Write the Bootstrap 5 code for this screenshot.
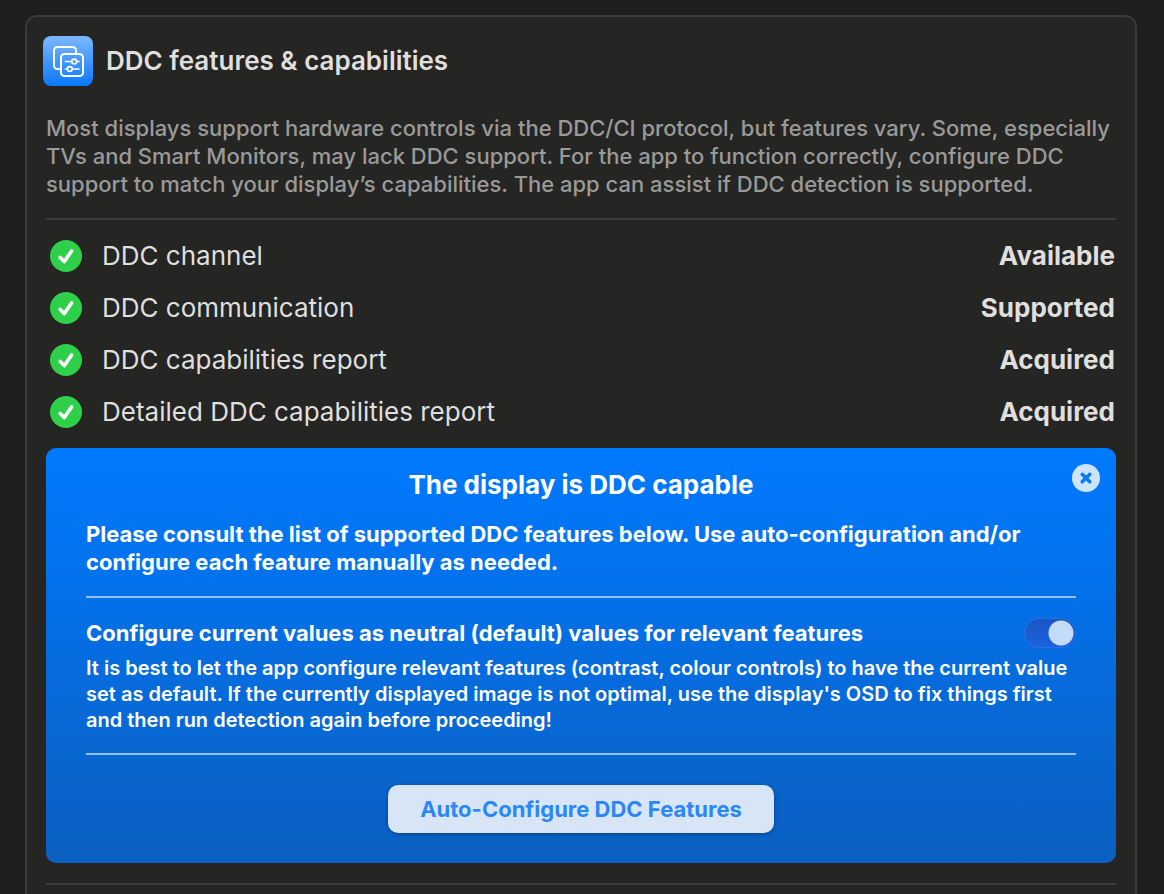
<!DOCTYPE html>
<html lang="en" data-bs-theme="dark">
<head>
<meta charset="utf-8">
<meta name="viewport" content="width=device-width, initial-scale=1">
<title>DDC features &amp; capabilities</title>
<link href="https://cdn.jsdelivr.net/npm/bootstrap@5.3.0/dist/css/bootstrap.min.css" rel="stylesheet">
<style>
  body { background: #1e1e1c; color: #dfdfde; font-family: Inter, "Liberation Sans", sans-serif; }
  .page { padding: 15px 27px 0 25px; }
  .settings { background: #252524; border: 2px solid #393938; border-bottom: 0; border-radius: 12px 12px 0 0; }
  .settings-head { padding: 19px 16px 0; gap: 13px; }
  .settings-body { padding: 28px 19px 9px; }
  .heading { font-size: 26px; line-height: 32px; font-weight: 600; color: inherit; }
  .copy { font-size: 22px; line-height: 28px; }
  .note { font-size: 20px; line-height: 26px; font-weight: 600; margin: 7px 0 20px; }
  .intro { color: #9a9a99; margin-bottom: 20px; font-weight: 500; }
  .rule { height: 2px; border: 0; opacity: 1; margin: 0; background: #3b3b3a; }
  .status-list { padding: 10px 1px 10px 4px; }
  .status { height: 52px; gap: 20px; font-size: 26px; line-height: 32px; }
  .panel { background: linear-gradient(#007aff, #0b5fc0); border-radius: 10px; padding: 21px 40px 30px; margin-bottom: 20px; color: #fff; }
  .panel .rule { background: #93c1f5; }
  .lead-in { margin: 19px 0 20px; }
  .option { margin-top: 20px; }
  .actions { margin-top: 30px; }
  .close-btn { top: 16px; right: 16px; line-height: 0; }
  .form-check-input.toggle { width: 52px; height: 30px; margin: 0; border: 1px solid #2f6fdb; border-radius: 15px; box-shadow: none;
    background: radial-gradient(circle at 36px 14px, #c3dbf7 12px, #c3dbf700 13px), linear-gradient(#1a55c4, #1c62dc); }
  .action { background: #d8e5f6; color: #2b87f5; border: 0; border-radius: 10px; height: 48px; padding: 0 32px; font-size: 22px; line-height: 28px; font-weight: 700; box-shadow: 0 1px 4px #0005; }
  .action:hover { background: #e6effa; color: #2b87f5; }
</style>
</head>
<body>
<svg class="d-none" aria-hidden="true">
  <symbol id="ok" viewBox="0 0 32 32">
    <circle cx="16" cy="16" r="16" fill="#2ed04a"/>
    <path d="M10.200 17.400l4 4.200L21.600 11" fill="none" stroke="#fff" stroke-width="3.600" stroke-linecap="round" stroke-linejoin="round"/>
  </symbol>
</svg>
<main class="page container-fluid min-vh-100 d-flex flex-column">
  <section class="settings flex-fill">
    <header class="settings-head d-flex align-items-center">
      <svg width="50" height="50" viewBox="0 0 50 50" class="flex-shrink-0" aria-hidden="true">
        <defs><linearGradient id="tile" x2="0" y2="1"><stop stop-color="#7db8ff"/><stop offset="1" stop-color="#0a78fc"/></linearGradient></defs>
        <rect width="50" height="50" rx="8" fill="url(#tile)"/>
        <g fill="none" stroke="#fff" stroke-width="2" stroke-linecap="round">
          <path d="M17 33h-2.500a3.500 3.500 0 0 1-3.500-3.500v-15a3.500 3.500 0 0 1 3.500-3.500h15a3.500 3.500 0 0 1 3.500 3.500V17"/>
          <rect x="18" y="18" width="22" height="22" rx="3.500"/>
          <path d="M22.500 25.500h6M34 25.500h2M22.500 33h2M29.500 33h6.500" stroke-width="1.600"/>
          <circle cx="31.200" cy="25.500" r="2.400" stroke-width="1.600"/>
          <circle cx="26.800" cy="33" r="2.400" stroke-width="1.600"/>
        </g>
      </svg>
      <h1 class="heading mb-0">DDC features &amp; capabilities</h1>
    </header>
    <div class="settings-body">
      <p class="copy intro">Most displays support hardware controls via the DDC/CI protocol, but features vary. Some, especially TVs and Smart Monitors, may lack DDC support. For the app to function correctly, configure DDC support to match your display’s capabilities. The app can assist if DDC detection is supported.</p>
      <hr class="rule">
      <ul class="status-list list-unstyled mb-0">
        <li class="status d-flex align-items-center"><svg width="32" height="32" aria-hidden="true"><use href="#ok"/></svg><span>DDC channel</span><strong class="ms-auto">Available</strong></li>
        <li class="status d-flex align-items-center"><svg width="32" height="32" aria-hidden="true"><use href="#ok"/></svg><span>DDC communication</span><strong class="ms-auto">Supported</strong></li>
        <li class="status d-flex align-items-center"><svg width="32" height="32" aria-hidden="true"><use href="#ok"/></svg><span>DDC capabilities report</span><strong class="ms-auto">Acquired</strong></li>
        <li class="status d-flex align-items-center"><svg width="32" height="32" aria-hidden="true"><use href="#ok"/></svg><span>Detailed DDC capabilities report</span><strong class="ms-auto">Acquired</strong></li>
      </ul>
      <section class="panel position-relative">
        <button type="button" class="close-btn btn p-0 border-0 position-absolute" aria-label="Close">
          <svg width="28" height="28" viewBox="0 0 28 28"><circle cx="14" cy="14" r="14" fill="#cce4ff"/><path d="M10.200 10.200l7.600 7.600M17.800 10.200l-7.600 7.600" stroke="#0877f4" stroke-width="3.400" stroke-linecap="round"/></svg>
        </button>
        <h2 class="heading fw-bold text-center mb-0">The display is DDC capable</h2>
        <p class="copy lead-in fw-bold">Please consult the list of supported DDC features below. Use auto-configuration and/or configure each feature manually as needed.</p>
        <hr class="rule">
        <div class="option d-flex align-items-center justify-content-between">
          <label class="copy fw-bold" for="neutral">Configure current values as neutral (default) values for relevant features</label>
          <input class="form-check-input toggle flex-shrink-0" type="checkbox" role="switch" id="neutral" checked>
        </div>
        <p class="note">It is best to let the app configure relevant features (contrast, colour controls) to have the current value set as default. If the currently displayed image is not optimal, use the display's OSD to fix things first and then run detection again before proceeding!</p>
        <hr class="rule">
        <div class="actions text-center"><button type="button" class="action btn">Auto-Configure DDC Features</button></div>
      </section>
      <hr class="rule">
    </div>
  </section>
</main>
<script src="https://cdn.jsdelivr.net/npm/bootstrap@5.3.0/dist/js/bootstrap.bundle.min.js"></script>
</body>
</html>
